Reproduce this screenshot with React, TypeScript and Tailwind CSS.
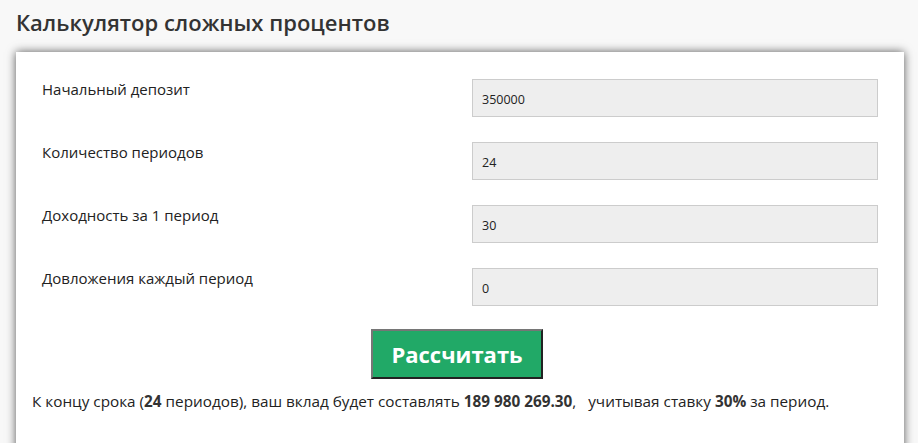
const rows = [
  { label: 'Начальный депозит', value: '350000' },
  { label: 'Количество периодов', value: '24' },
  { label: 'Доходность за 1 период', value: '30' },
  { label: 'Довложения каждый период', value: '0' },
];

export default function App() {
  return (
    <div className="min-h-screen overflow-hidden bg-[#f8f8f8] font-['Open_Sans',sans-serif] text-[#222]">
      <h1 className="px-4 pt-[8px] text-[22px] font-semibold leading-[29px] text-[#333]">
        Калькулятор сложных процентов
      </h1>

      <section className="ml-4 mr-[14px] mt-[15px] h-[420px] bg-white pl-4 pr-[16px] pt-[27px] shadow-[0_0_9px_rgba(0,0,0,0.65)]">
        {rows.map((row) => (
          <div key={row.label} className="mb-[25px] grid grid-cols-[1fr_406px] pr-[10px]">
            <label className="pl-[10px] text-[15px] leading-[21px]">{row.label}</label>
            <input
              type="text"
              defaultValue={row.value}
              className="h-[38px] w-full border border-[#ccc] bg-[#eee] px-[9px] pt-[2px] text-[12.5px] text-[#222] outline-none"
            />
          </div>
        ))}

        <div className="-mt-[2px] flex justify-center pr-[6px]">
          <button
            type="button"
            className="h-[50px] w-[172px] border-2 border-t-[#767676] border-l-[#767676] border-r-[#222] border-b-[#222] bg-[#21a967] text-[22px] font-bold text-white"
          >
            Рассчитать
          </button>
        </div>

        <p className="pt-[12px] text-[15.3px] leading-[21px]">
          К концу срока (<b className="text-[#333]">24</b> периодов), ваш вклад будет составлять{' '}
          <b className="text-[#333]">189 980 269.30</b>,&nbsp;&nbsp; учитывая ставку{' '}
          <b className="text-[#333]">30%</b> за период.
        </p>
      </section>
    </div>
  );
}
